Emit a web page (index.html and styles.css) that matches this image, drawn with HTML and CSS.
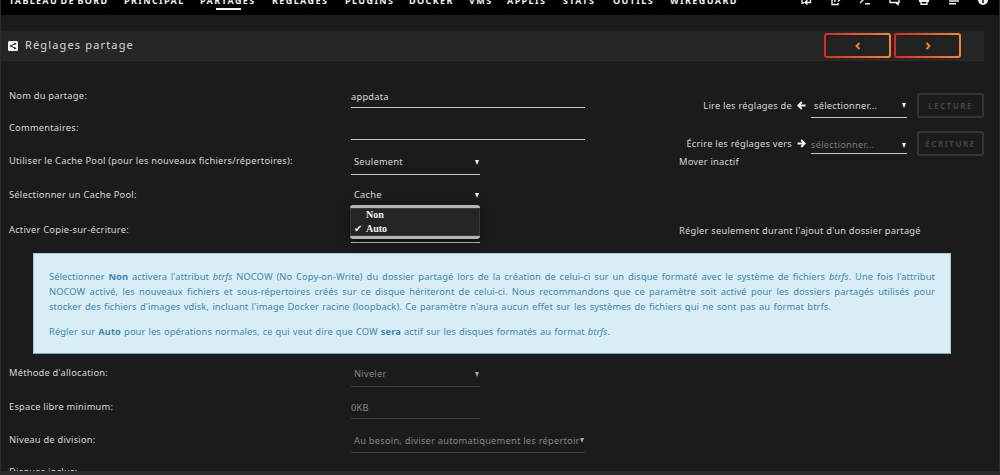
FILE: index.html
```
<!DOCTYPE html>
<html lang="fr">
<head>
    <meta charset="UTF-8">
    <meta name="viewport" content="width=device-width, initial-scale=1.0">
    <title>Réglages partage</title>
    <link rel="stylesheet" href="styles.css">
</head>
<body>
    <nav class="menu">
        <div class="menu-items">
            <a class="w-dash">TABLEAU DE BORD</a>
            <a class="w-main">PRINCIPAL</a>
            <a class="w-shares active">PARTAGES</a>
            <a class="w-settings">RÉGLAGES</a>
            <a class="w-plugins">PLUGINS</a>
            <a class="w-docker">DOCKER</a>
            <a class="w-vms">VMS</a>
            <a class="w-apps">APPLIS</a>
            <a class="w-stats">STATS</a>
            <a class="w-tools">OUTILS</a>
            <a class="w-wire">WIREGUARD</a>
        </div>
        <div class="menu-icons">
            <svg viewBox="0 0 12 12"><path d="M2 4v5h2M10.500 4v4.500H5.500M7.500 6L5 8.500l2.500 2"/></svg>
            <svg viewBox="0 0 12 12"><path d="M5 3H2v7.500h6V9M5 8V5h5M8 2.500L10.500 5 8 7.500"/></svg>
            <svg viewBox="0 0 12 12"><path d="M1 3l3 3-3 3M6 9.800h5"/></svg>
            <svg viewBox="0 0 12 12"><path d="M1 2h9v6.500H1zM6 8l3 2.500V8"/></svg>
            <svg viewBox="0 0 12 12"><path class="solid" d="M1 2h10v6H1z"/><path d="M3 8v2.300h6V8"/></svg>
            <svg viewBox="0 0 12 12"><path d="M1 2h8M1 4.500h10M1 7h10M1 9.700h7"/></svg>
            <svg viewBox="0 0 12 12"><circle class="solid" cx="6" cy="6" r="5"/><path class="dark" d="M6 5v4"/></svg>
        </div>
    </nav>

    <div class="title">
        <svg class="share" viewBox="0 0 10 10"><rect width="10" height="10" rx="1.500"/><path d="M7 2.700L3 5l4 2.300"/><circle cx="7" cy="2.700" r="1"/><circle cx="3" cy="5" r="1"/><circle cx="7" cy="7.300" r="1"/></svg>
        <span class="title-text">Réglages partage</span>
        <div class="title-nav">
            <button type="button"><svg viewBox="0 0 8 8"><path d="M5.500 1l-3 3 3 3"/></svg></button>
            <button type="button"><svg viewBox="0 0 8 8"><path d="M2.500 1l3 3-3 3"/></svg></button>
        </div>
    </div>

    <div class="top">
        <div class="rows">
            <div class="row r32">
                <label>Nom du partage:</label>
                <div class="field wide"><span>appdata</span></div>
            </div>
            <div class="row r32">
                <label>Commentaires:</label>
                <div class="field wide"></div>
            </div>
            <div class="row r33">
                <label>Utiliser le Cache Pool (pour les nouveaux fichiers/répertoires):</label>
                <div class="field select"><span>Seulement</span><i class="arrow"></i></div>
            </div>
            <div class="row r35">
                <label>Sélectionner un Cache Pool:</label>
                <div class="field select"><span>Cache</span><i class="arrow"></i></div>
            </div>
            <div class="row r35">
                <label>Activer Copie-sur-écriture:</label>
                <div class="field select cow">
                    <div class="popup">
                        <div class="option"><b></b>Non</div>
                        <div class="option"><b>✔</b>Auto</div>
                    </div>
                </div>
            </div>
        </div>
        <div class="side">
            <div class="copy">
                <span class="copy-label">Lire les réglages de</span>
                <svg class="dir" viewBox="0 0 9 9"><path d="M8.500 4.500H1.500M4.800 1L1.300 4.500 4.800 8"/></svg>
                <div class="field target"><span>sélectionner...</span><i class="arrow"></i></div>
                <button type="button" disabled>LECTURE</button>
            </div>
            <div class="copy write">
                <span class="copy-label">Écrire les réglages vers</span>
                <svg class="dir" viewBox="0 0 9 9"><path d="M.5 4.500h7M4.200 1l3.500 3.500L4.200 8"/></svg>
                <div class="field target"><span>sélectionner...</span><i class="arrow"></i></div>
                <button type="button" disabled>ÉCRITURE</button>
            </div>
            <div class="note mover">Mover inactif</div>
            <div class="note cow-note">Régler seulement durant l'ajout d'un dossier partagé</div>
        </div>
    </div>

    <div class="help">
        <div class="line">Sélectionner <strong>Non</strong> activera l'attribut <em>btrfs</em> NOCOW (No Copy-on-Write) du dossier partagé lors de la création de celui-ci sur un disque formaté avec le système de fichiers <em>btrfs</em>. Une fois l'attribut</div>
        <div class="line">NOCOW activé, les nouveaux fichiers et sous-répertoires créés sur ce disque hériteront de celui-ci. Nous recommandons que ce paramètre soit activé pour les dossiers partagés utilisés pour</div>
        <div class="line third">stocker des fichiers d'images vdisk, incluant l'image Docker racine (loopback). Ce paramètre n'aura aucun effet sur les systèmes de fichiers qui ne sont pas au format btrfs.</div>
        <div class="line last">Régler sur <strong>Auto</strong> pour les opérations normales, ce qui veut dire que COW <strong>sera</strong> actif sur les disques formatés au format <em>btrfs</em>.</div>
    </div>

    <div class="rows bottom">
        <div class="row r34">
            <label>Méthode d'allocation:</label>
            <div class="field select off"><span>Niveler</span><i class="arrow"></i></div>
        </div>
        <div class="row r34">
            <label>Espace libre minimum:</label>
            <div class="field small off"><span>0KB</span></div>
        </div>
        <div class="row r32">
            <label>Niveau de division:</label>
            <div class="field select wide off"><span>Au besoin, diviser automatiquement les répertoires</span><i class="arrow"></i></div>
        </div>
        <div class="row r32">
            <label>Disques inclus:</label>
        </div>
    </div>
    <footer class="footer"></footer>
</body>
</html>
```
FILE: styles.css
```
* { box-sizing: border-box; }
body { margin: 0; width: 1000px; height: 475px; overflow: hidden; position: relative; background: #1b1b1b; color: #d8d8d8; font: 9.3px/14px "Noto Sans", sans-serif; letter-spacing: .23px; border-left: 1px solid #2c2c2c; border-right: 1px solid #2c2c2c; }
svg { display: block; fill: none; stroke: #f2f2f2; stroke-width: 1.4; }

.menu { height: 15px; margin: 0 -1px; background: #000; display: flex; justify-content: space-between; padding: 0 11px 0 9px; overflow: hidden; }
.menu-items { display: flex; gap: 17px; }
.menu a { position: relative; margin-top: -6px; height: 21px; white-space: nowrap; color: #f2f2f2; font-size: 9px; font-weight: bold; letter-spacing: 1.4px; }
.menu .active::after { content: ""; position: absolute; left: 16px; bottom: 5px; width: 25px; height: 2px; background: #f2f2f2; }
.menu .w-dash { width: 98px; letter-spacing: 1.3px; word-spacing: -1px; }
.w-main { width: 59px; }
.w-shares { width: 55px; }
.w-settings { width: 56px; }
.w-plugins { width: 47px; }
.w-docker { width: 43px; }
.w-vms { width: 21px; }
.w-apps { width: 39px; }
.w-stats { width: 33px; }
.w-tools { width: 40px; }
.w-wire { width: 65px; }
.menu-icons { display: flex; gap: 17.500px; margin-top: -6px; }
.menu-icons svg { width: 12px; height: 12px; }
.menu-icons .solid { fill: #f2f2f2; stroke: none; }
.menu-icons .dark { stroke: #000; }

.title { height: 30px; margin: 16px 15px 19px -1px; padding: 0 23px 0 8px; display: flex; align-items: center; background: #262626; border-top: 1px solid #222; border-bottom: 1px solid #2a2a2a; }
.share { width: 10px; height: 10px; margin-top: -1px; margin-right: 7px; }
.share rect { fill: #f2f2f2; stroke: none; }
.share path { stroke: #262626; stroke-width: 1; }
.share circle { fill: #262626; stroke: none; }
.title-text { margin-top: -2px; font-size: 11px; letter-spacing: 1.15px; }
.title-nav { display: flex; gap: 3px; margin-left: auto; margin-top: -1px; }
button { width: 67px; height: 25px; padding: 0; display: flex; align-items: center; justify-content: center; font: bold 8px "Noto Sans", sans-serif; letter-spacing: 1.5px; border: 0; border-radius: 3px; color: #444; }
.title-nav button { background: linear-gradient(#222, #222) padding-box, linear-gradient(90deg, #d92828, #f0882f) border-box; border: 2px solid transparent; }
.title-nav svg { width: 8px; height: 8px; stroke: #f28830; stroke-width: 1.8; }

.top { display: flex; height: 173px; }
.rows { width: 678px; }
.row { display: flex; }
.row label { width: 341px; padding-left: 8px; align-self: center; white-space: nowrap; }
.row label + .field { margin-left: 9px; }
.r32 { height: 32px; }
.r33 { height: 33px; }
.r34 { height: 34px; }
.r35 { height: 35px; }
.field { display: flex; align-items: center; height: 28px; padding-top: 7px; border-bottom: 1px solid #c9c9c9; }
.field.wide { width: 234px; }
.field.small { width: 129px; height: 29px; }
.field.select { height: 31px; padding: 6px 0 0 3px; }
.field.select:not(.wide) { width: 129px; }
.field.select.wide { height: 29px; padding-top: 5px; }
.field span { white-space: nowrap; overflow: hidden; }
.arrow { flex: none; margin-left: auto; margin-right: 1px; border: 2px solid transparent; border-top: 5px solid #f2f2f2; border-bottom: 0; }
.off { color: #858585; border-color: #3e3e3e; }
.off .arrow { border-top-color: #aaa; }
.cow { position: relative; }
.popup { position: absolute; left: -1px; top: -7px; width: 130px; height: 34px; background: #252525; border: solid #b4b4b4; border-width: 3px 0; border-radius: 3px; font: bold 10px/14px "Liberation Serif", serif; letter-spacing: 0; color: #f2f2f2; box-shadow: 0 2px 8px rgba(0, 0, 0, .5), inset 0 0 0 1px #3a3a3a; }
.option { height: 14px; padding-left: 4px; display: flex; }
.option b { width: 12px; font-family: "DejaVu Sans", sans-serif; }

.side { width: 305px; padding-top: 13px; }
.copy { display: flex; align-items: center; justify-content: flex-end; height: 25px; margin-bottom: 13px; }
.copy-label { white-space: nowrap; }
.dir { width: 9px; height: 9px; margin: 0 5px 0 5px; stroke-width: 1.900; }
.target { width: 96px; height: 25px; padding: 1px 0 0 3px; margin-right: 10px; }
.write .target { height: 20px; padding: 3px 0 0; align-self: flex-start; margin-top: 3px; }
.write .target span { color: #777; }
.copy button { background: #1b1b1b; border: 2px solid #343434; }
.note { white-space: nowrap; }
.mover { margin-top: -14px; }
.cow-note { margin-top: 55px; }

.help { width: 918px; height: 101px; margin-left: 32px; padding: 15px 15px; background: #d9edf7; border: 1px solid #a5c9d0; border-bottom-color: #72a8b0; color: #3a87ad; line-height: 15px; letter-spacing: .1px; }
.line { white-space: nowrap; text-align: justify; text-align-last: justify; }
.third { width: 782px; }
.last { width: 561px; margin-top: 10px; }
.bottom { margin-top: 2px; }
.footer { position: absolute; left: -1px; right: -1px; bottom: 0; height: 4px; background: #2b2b2b; }
```
